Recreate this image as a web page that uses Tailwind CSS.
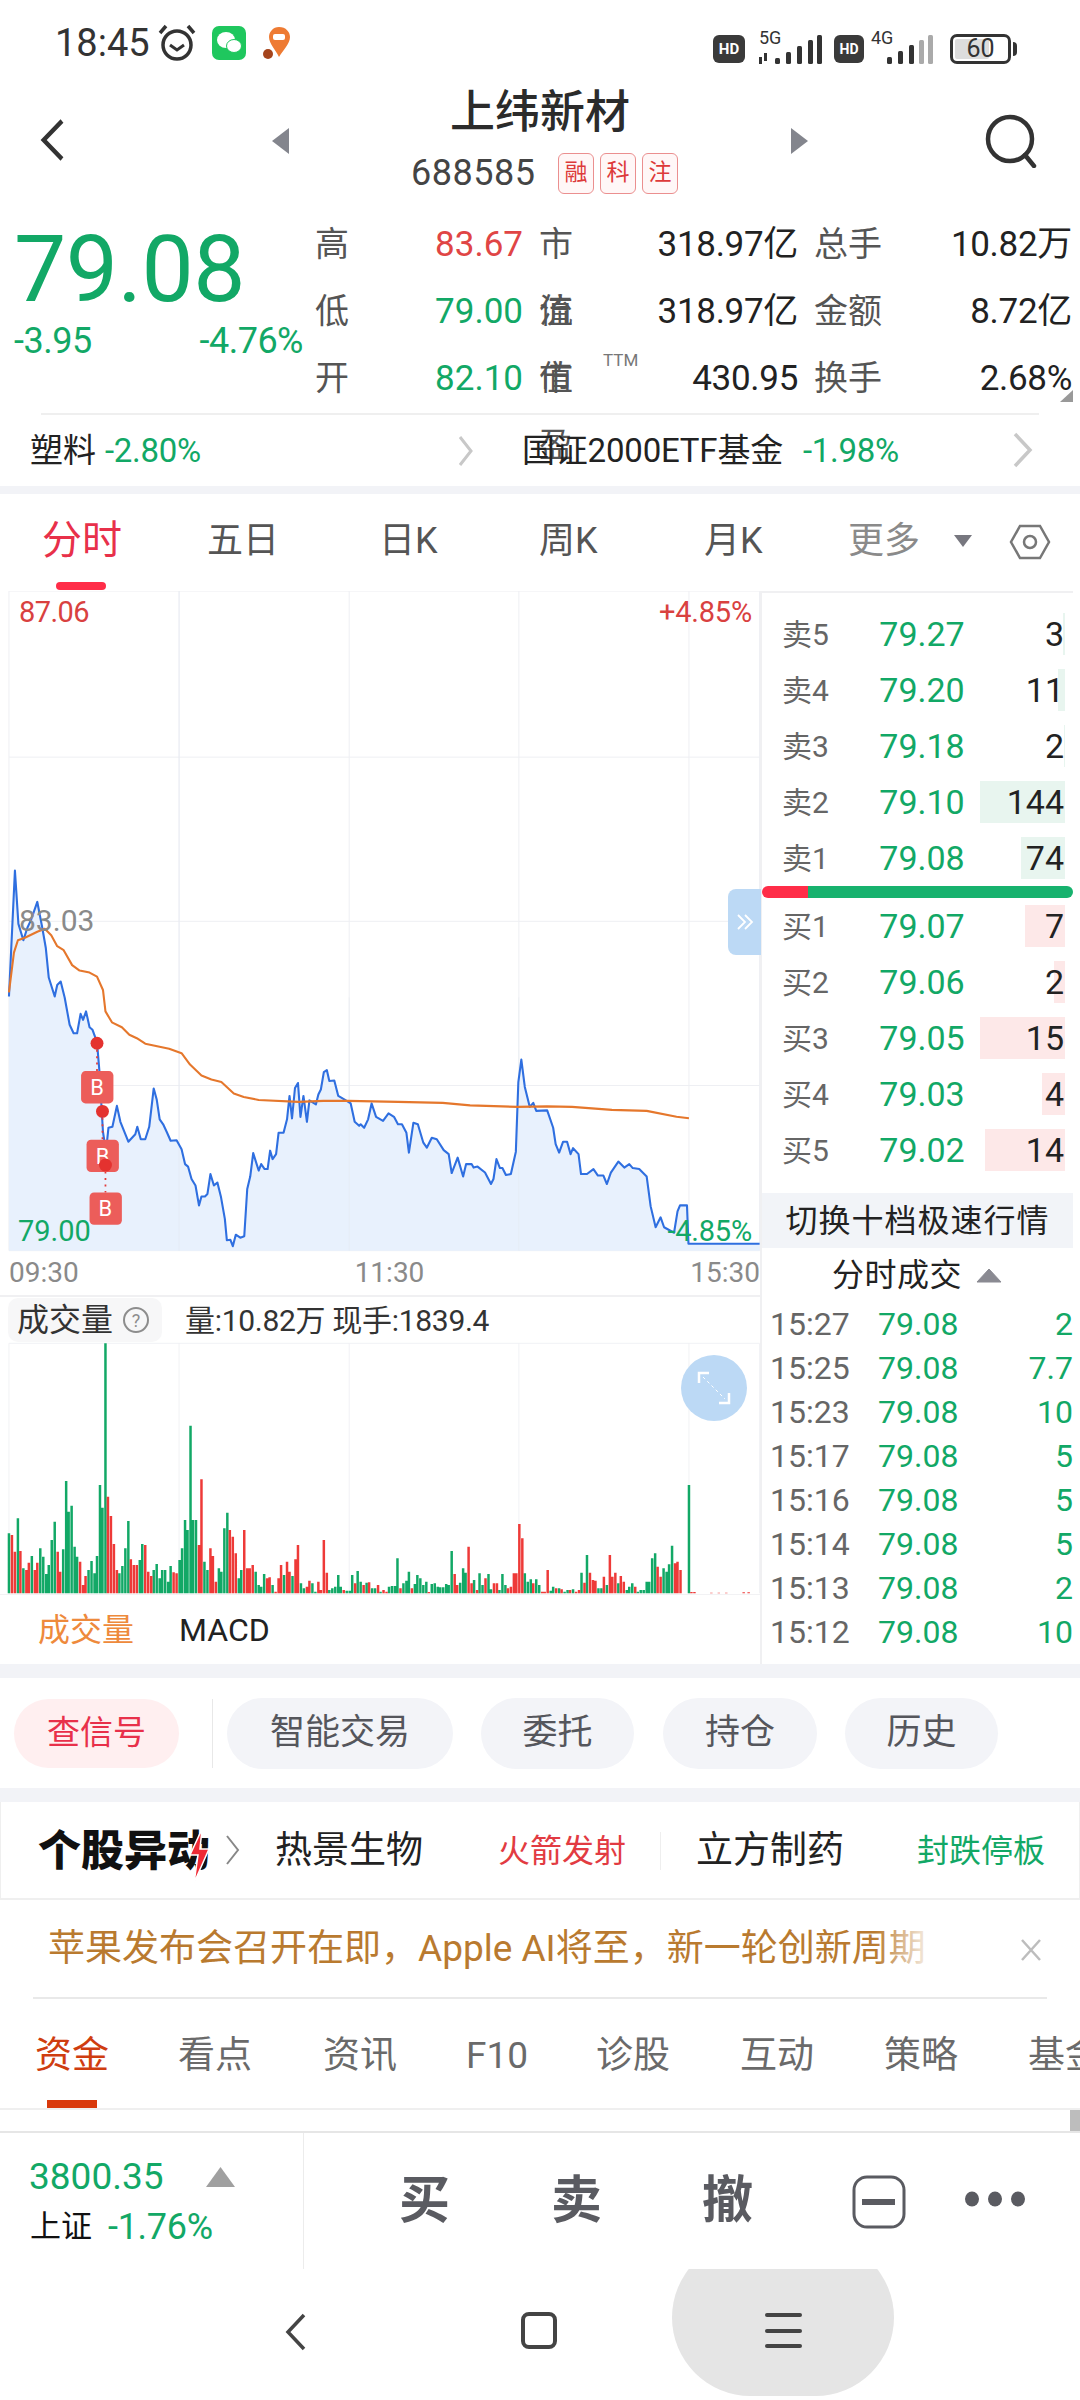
<!DOCTYPE html>
<html lang="zh-CN">
<head>
<meta charset="utf-8">
<title>上纬新材</title>
<script src="https://cdn.jsdelivr.net/npm/@tailwindcss/browser@4"></script>
</head>
<body>
<div class="w-[1080px] h-[2400px] bg-white overflow-hidden flex flex-col text-[#222] font-['Roboto','Noto_Sans_CJK_SC',sans-serif]">

<!-- status bar -->
<div class="h-[75px] shrink-0 relative flex items-center">
  <span class="ml-[55px] w-[102px] text-[38px] leading-none text-[#333] pt-[10px]">18:45</span>
  <svg class="mt-[10px]" width="40" height="40" viewBox="0 0 40 40" fill="none" stroke="#333" stroke-width="3.5"><circle cx="20" cy="22" r="14"/><path d="M13 22l7 5 7-5" stroke-width="3"/><path d="M3 10 9 3M37 10 31 3"/></svg>
  <div class="ml-[15px] mt-[10px] w-[34px] h-[34px] rounded-[7px] bg-[#1fc75e] flex items-center justify-center">
    <svg width="26" height="24" viewBox="0 0 26 24" fill="#fff"><ellipse cx="10" cy="9" rx="9" ry="8"/><ellipse cx="18" cy="15" rx="7.5" ry="6.5" stroke="#1fc75e"/></svg>
  </div>
  <svg class="ml-[15px] mt-[10px]" width="33" height="36" viewBox="0 0 33 36"><path d="M18 2c7 0 11 5 11 10 0 7-7 13-11 20-3-7-10-13-10-20C8 7 12 2 18 2z" fill="#ee7b33"/><rect x="12" y="9" width="12" height="6" rx="2" fill="#fff"/><circle cx="7" cy="29" r="5" fill="#a5441c"/></svg>

  <div class="absolute left-[713px] top-[35px] w-[32px] h-[28px] rounded-[6px] bg-[#3a3a3a] text-white text-[15px] font-bold flex items-center justify-center">HD</div>
  <span class="absolute left-[759px] top-[28px] text-[18px] leading-[20px] text-[#333]">5G</span>
  <svg class="absolute left-[757px] top-[35px]" width="66" height="30" viewBox="0 0 66 30" fill="#333"><path d="M2 22h3v7H2zM7 18h3v8H7z"/><rect x="18" y="23" width="5" height="6" rx="1.5"/><rect x="29" y="17" width="5" height="12" rx="1.5"/><rect x="40" y="11" width="5" height="18" rx="1.5"/><rect x="51" y="5" width="5" height="24" rx="1.5"/><rect x="60" y="0" width="5" height="29" rx="1.5"/></svg>
  <div class="absolute left-[834px] top-[35px] w-[30px] h-[28px] rounded-[6px] bg-[#3a3a3a] text-white text-[14px] font-bold flex items-center justify-center">HD</div>
  <span class="absolute left-[871px] top-[28px] text-[18px] leading-[20px] text-[#333]">4G</span>
  <svg class="absolute left-[885px] top-[35px]" width="50" height="30" viewBox="0 0 50 30"><rect x="2" y="22" width="5" height="7" rx="1.5" fill="#333"/><rect x="13" y="16" width="5" height="13" rx="1.5" fill="#333"/><rect x="24" y="10" width="5" height="19" rx="1.5" fill="#333"/><rect x="34" y="5" width="5" height="24" rx="1.5" fill="#aaa"/><rect x="43" y="0" width="5" height="29" rx="1.5" fill="#aaa"/></svg>
  <div class="absolute left-[950px] top-[34px] w-[61px] h-[30px] rounded-[7px] border-[3px] border-[#333] p-[2px]"><div class="w-[34px] h-full bg-[#ddd] rounded-[2px]"></div></div>
  <span class="absolute left-[950px] top-[34px] w-[61px] h-[30px] text-center text-[25px] leading-[30px] text-[#333]">60</span>
  <div class="absolute left-[1013px] top-[42px] w-[4px] h-[14px] rounded-r bg-[#333]"></div>
</div>

<!-- header -->
<div class="h-[135px] shrink-0 relative">
  <svg class="absolute left-[40px] top-[43px]" width="28" height="44" viewBox="0 0 28 44" fill="none" stroke="#333" stroke-width="4.5"><path d="M25 3 5 22l20 19" stroke-linejoin="miter" transform="translate(-1 0) scale(.92 1)"/></svg>
  <svg class="absolute left-[272px] top-[53px]" width="18" height="26" viewBox="0 0 18 26" fill="#83858d"><path d="M17 0v26L0 13z"/></svg>
  <svg class="absolute left-[791px] top-[53px]" width="18" height="26" viewBox="0 0 18 26" fill="#83858d"><path d="M0 0v26l17-13z"/></svg>
  <div class="absolute left-0 w-full top-[10px] text-center text-[45px] leading-[56px] font-medium text-[#2b2b2b] pl-[-1px]">上纬新材</div>
  <div class="absolute left-[411px] top-[74px] h-[48px] flex items-center">
    <span class="w-[147px] text-[36px] text-[#444] tracking-[0.5px]">688585</span>
    <span class="w-[36px] h-[41px] rounded-[6px] border border-[#eb8f8f] bg-[#fff7f7] text-[#dd3a3a] text-[23px] flex items-center justify-center">融</span>
    <span class="ml-[6px] w-[36px] h-[41px] rounded-[6px] border border-[#eb8f8f] bg-[#fff7f7] text-[#dd3a3a] text-[23px] flex items-center justify-center">科</span>
    <span class="ml-[6px] w-[36px] h-[41px] rounded-[6px] border border-[#eb8f8f] bg-[#fff7f7] text-[#dd3a3a] text-[23px] flex items-center justify-center">注</span>
  </div>
  <svg class="absolute left-[984px] top-[39px]" width="56" height="54" viewBox="0 0 56 54" fill="none" stroke="#333" stroke-width="4.5"><circle cx="26" cy="25" r="22"/><path d="M41 41l9 11" stroke-linecap="round"/></svg>
</div>

<!-- quote -->
<div class="h-[203px] shrink-0 relative flex">
  <div class="w-[315px] shrink-0 text-[#12a866]">
    <div class="pl-[14px] pt-[14px] text-[93px] leading-[92px] h-[106px] tracking-[-0.5px]">79.08</div>
    <div class="pl-[14px] pr-[12px] flex justify-between text-[36px] leading-[44px] mt-[3px]"><span class="tracking-[-0.5px]">-3.95</span><span class="tracking-[-0.5px]">-4.76%</span></div>
  </div>
  <div class="flex-1 pt-[1px] text-[34px] leading-[67px]">
    <div class="flex h-[67px]">
      <span class="w-[48px] text-[#555]">高</span><span class="w-[160px] text-right text-[#e04545] text-[35px]">83.67</span><span class="ml-[16px] w-[67px] text-[#555]">市值</span><span class="w-[192px] text-right text-[35px] tracking-[-0.3px]">318.97亿</span><span class="ml-[16px] w-[68px] text-[#555]">总手</span><span class="w-[190px] text-right text-[35px] tracking-[-0.3px]">10.82万</span>
    </div>
    <div class="flex h-[67px]">
      <span class="w-[48px] text-[#555]">低</span><span class="w-[160px] text-right text-[#12a866] text-[35px]">79.00</span><span class="ml-[16px] w-[67px] text-[#555]">流值</span><span class="w-[192px] text-right text-[35px] tracking-[-0.3px]">318.97亿</span><span class="ml-[16px] w-[68px] text-[#555]">金额</span><span class="w-[190px] text-right text-[35px] tracking-[-0.3px]">8.72亿</span>
    </div>
    <div class="flex h-[67px]">
      <span class="w-[48px] text-[#555]">开</span><span class="w-[160px] text-right text-[#12a866] text-[35px]">82.10</span><span class="ml-[16px] w-[67px] text-[#555] relative">市盈<span class="absolute left-[64px] top-[-18px] text-[17px] text-[#777]">TTM</span></span><span class="w-[192px] text-right text-[35px] tracking-[-0.3px]">430.95</span><span class="ml-[16px] w-[68px] text-[#555]">换手</span><span class="w-[190px] text-right text-[35px] tracking-[-0.3px]">2.68%</span>
    </div>
  </div>
  <div class="absolute left-[1060px] top-[180px] w-0 h-0 border-l-[13px] border-l-transparent border-b-[12px] border-b-[#999]"></div>
</div>

<!-- related -->
<div class="h-[73px] shrink-0 mx-[41px] border-t-2 border-[#efefef] relative flex items-center text-[33px]">
  <span class="absolute left-[-11px]">塑料</span><span class="absolute left-[64px] text-[#12a866] tracking-[-0.3px]">-2.80%</span>
  <svg class="absolute left-[416px] top-[20px]" width="18" height="32" viewBox="0 0 18 32" fill="none" stroke="#c8c8c8" stroke-width="3"><path d="M3 2l11 14L3 30"/></svg>
  <span class="absolute left-[481px] tracking-[-0.2px]">国证2000ETF基金</span><span class="absolute left-[762px] text-[#12a866] tracking-[-0.3px]">-1.98%</span>
  <svg class="absolute left-[971px] top-[17px]" width="22" height="36" viewBox="0 0 22 36" fill="none" stroke="#c8c8c8" stroke-width="3.5"><path d="M3 2l15 16L3 34"/></svg>
</div>
<div class="h-[8px] shrink-0 bg-[#f2f3f7]"></div>

<!-- chart tabs -->
<div class="h-[97px] shrink-0 relative flex items-center text-[36px] text-[#555]">
  <span class="absolute left-[42px] top-[22px] text-[40px] leading-[50px] text-[#e8304a]">分时</span>
  <div class="absolute left-[56px] top-[88px] w-[50px] h-[8px] rounded-full bg-[#ff2d48]"></div>
  <span class="absolute left-[207px] top-[22px] leading-[50px]">五日</span>
  <span class="absolute left-[379px] top-[22px] leading-[50px]">日K</span>
  <span class="absolute left-[539px] top-[22px] leading-[50px]">周K</span>
  <span class="absolute left-[704px] top-[22px] leading-[50px]">月K</span>
  <span class="absolute left-[848px] top-[22px] leading-[50px] text-[#8a8a8a]">更多</span>
  <svg class="absolute left-[953px] top-[40px]" width="20" height="14" viewBox="0 0 20 14" fill="#77777f"><path d="M1 1h18L10 13z"/></svg>
  <svg class="absolute left-[1009px] top-[29px]" width="42" height="38" viewBox="0 0 42 38" fill="none" stroke="#777" stroke-width="2.5"><path d="M11 3h20l9 16-9 16H11L2 19z"/><circle cx="21" cy="19" r="6"/></svg>
</div>

<!-- market body -->
<div class="h-[1073px] shrink-0 flex overflow-hidden">
  <div class="w-[760px] shrink-0 relative h-full">
    <!-- intraday chart -->
    <div class="relative h-[660px] w-[760px]">
      <svg class="absolute left-0 top-[-91px]" width="780" height="780" viewBox="0 0 1568 1568" fill="none">
        <path d="M18 183H1527V1509H18Z M18 517H1527 M18 847H1527 M18 1177H1527 M360 183V1509 M702 183V1509 M1043 183V1509 M1385 183V1509" stroke="#eeeff3" stroke-width="2"/>
        <path id="pf" d="M18 1509V998L30 745 37 852 47 885 55 860 62 845 75 808 85 860 92 900 98 960 110 998 115 975 122 968 130 1000 140 1055 148 1072 155 1072 162 1033 167 1045 173 1028 180 1060 186 1065 195 1090 200 1150 207 1270 213 1310 218 1262 226 1260 235 1218 242 1250 258 1290 272 1275 276 1260 283 1285 292 1285 300 1260 309 1183 315 1205 321 1245 328 1255 335 1270 343 1288 355 1287 365 1305 372 1335 378 1340 385 1365 393 1378 400 1418 405 1400 412 1400 417 1395 423 1355 430 1378 437 1372 444 1400 452 1445 456 1488 463 1487 468 1500 474 1477 483 1483 491 1480 497 1385 503 1360 509 1313 520 1348 525 1335 532 1345 538 1345 543 1308 548 1325 555 1315 560 1272 570 1272 577 1245 582 1198 587 1243 593 1182 599 1172 604 1240 610 1198 617 1250 622 1207 635 1215 640 1195 645 1185 651 1150 657 1146 662 1168 672 1167 680 1198 692 1205 705 1213 713 1250 722 1258 725 1255 732 1262 740 1245 747 1213 756 1240 770 1248 781 1233 792 1240 800 1255 808 1255 817 1272 822 1312 831 1252 840 1255 851 1292 858 1302 868 1282 878 1285 892 1307 902 1315 908 1353 920 1322 931 1360 937 1335 948 1335 952 1342 960 1340 975 1352 987 1375 992 1365 998 1325 1005 1343 1010 1343 1017 1357 1027 1355 1037 1310 1042 1170 1048 1125 1055 1180 1065 1220 1072 1212 1078 1228 1100 1227 1112 1262 1117 1295 1124 1312 1132 1290 1140 1290 1147 1315 1152 1303 1163 1315 1168 1355 1180 1355 1193 1345 1202 1358 1213 1358 1220 1375 1228 1352 1243 1330 1255 1342 1265 1335 1272 1343 1285 1345 1300 1360 1308 1420 1318 1462 1328 1442 1335 1462 1355 1473 1362 1430 1367 1418 1381 1418 1384 1495 1527 1495V1509Z" fill="#e8f1fd"/>
        <path d="M360 183V1509 M702 1000V1509 M1043 1000V1509" stroke="#e3e8f0" stroke-width="1.5" opacity=".6"/>
        <path d="M18 998L30 745 37 852 47 885 55 860 62 845 75 808 85 860 92 900 98 960 110 998 115 975 122 968 130 1000 140 1055 148 1072 155 1072 162 1033 167 1045 173 1028 180 1060 186 1065 195 1090 200 1150 207 1270 213 1310 218 1262 226 1260 235 1218 242 1250 258 1290 272 1275 276 1260 283 1285 292 1285 300 1260 309 1183 315 1205 321 1245 328 1255 335 1270 343 1288 355 1287 365 1305 372 1335 378 1340 385 1365 393 1378 400 1418 405 1400 412 1400 417 1395 423 1355 430 1378 437 1372 444 1400 452 1445 456 1488 463 1487 468 1500 474 1477 483 1483 491 1480 497 1385 503 1360 509 1313 520 1348 525 1335 532 1345 538 1345 543 1308 548 1325 555 1315 560 1272 570 1272 577 1245 582 1198 587 1243 593 1182 599 1172 604 1240 610 1198 617 1250 622 1207 635 1215 640 1195 645 1185 651 1150 657 1146 662 1168 672 1167 680 1198 692 1205 705 1213 713 1250 722 1258 725 1255 732 1262 740 1245 747 1213 756 1240 770 1248 781 1233 792 1240 800 1255 808 1255 817 1272 822 1312 831 1252 840 1255 851 1292 858 1302 868 1282 878 1285 892 1307 902 1315 908 1353 920 1322 931 1360 937 1335 948 1335 952 1342 960 1340 975 1352 987 1375 992 1365 998 1325 1005 1343 1010 1343 1017 1357 1027 1355 1037 1310 1042 1170 1048 1125 1055 1180 1065 1220 1072 1212 1078 1228 1100 1227 1112 1262 1117 1295 1124 1312 1132 1290 1140 1290 1147 1315 1152 1303 1163 1315 1168 1355 1180 1355 1193 1345 1202 1358 1213 1358 1220 1375 1228 1352 1243 1330 1255 1342 1265 1335 1272 1343 1285 1345 1300 1360 1308 1420 1318 1462 1328 1442 1335 1462 1355 1473 1362 1430 1367 1418 1381 1418 1384 1495 1527 1495" stroke="#2f6fe0" stroke-width="4.2" stroke-linejoin="round"/>
        <path d="M18 990 28 910 36 885 50 880 75 868 90 862 103 875 115 897 128 905 145 935 160 946 180 950 195 958 207 985 212 1028 225 1050 245 1060 260 1075 275 1082 292 1093 340 1103 365 1112 382 1135 405 1157 425 1165 445 1170 470 1193 490 1200 520 1206 600 1210 650 1208 700 1208 800 1210 890 1212 945 1217 1040 1220 1100 1219 1150 1220 1230 1226 1300 1228 1360 1240 1385 1243" stroke="#e5772c" stroke-width="4.2" stroke-linejoin="round"/>
        <path d="M195 1092V1150 M206 1229V1288 M212 1337V1392" stroke="#e23b3b" stroke-width="3.5" stroke-dasharray="4 9"/>
        <rect x="163" y="1148" width="65" height="65" rx="9" fill="#ec5d5a"/>
        <rect x="174" y="1286" width="65" height="65" rx="9" fill="#ec5d5a"/>
        <rect x="180" y="1392" width="65" height="65" rx="9" fill="#ec5d5a"/>
        <text x="195" y="1196" text-anchor="middle" font-size="44" fill="#fff">B</text>
        <text x="206" y="1334" text-anchor="middle" font-size="44" fill="#fff">B</text>
        <text x="212" y="1440" text-anchor="middle" font-size="44" fill="#fff">B</text>
        <circle cx="195" cy="1092" r="13" fill="#e4322f"/>
        <circle cx="206" cy="1229" r="13" fill="#e4322f"/>
        <circle cx="212" cy="1337" r="13" fill="#e4322f"/>
      </svg>
      <span class="absolute left-[19px] top-[6px] text-[29px] leading-[30px] text-[#d9413f] tracking-[-0.6px]">87.06</span>
      <span class="absolute right-[8px] top-[6px] text-[29px] leading-[30px] text-[#d9413f] tracking-[-0.2px]">+4.85%</span>
      <span class="absolute left-[19px] top-[315px] text-[30px] leading-[30px] text-[#8a8a8a]">83.03</span>
      <span class="absolute left-[18px] top-[625px] text-[29px] leading-[30px] text-[#12a866]">79.00</span>
      <span class="absolute right-[8px] top-[625px] text-[29px] leading-[30px] text-[#12a866] tracking-[-0.2px]">-4.85%</span>
      <div class="absolute left-[728px] top-[298px] w-[33px] h-[66px] rounded-l-[8px] bg-[#bcd9f5] flex items-center justify-center">
        <svg width="18" height="18" viewBox="0 0 18 18" fill="none" stroke="#fff" stroke-width="1.8"><path d="M2 2l7 7-7 7M9 2l7 7-7 7"/></svg>
      </div>
    </div>
    <!-- time axis -->
    <div class="h-[46px] flex justify-between items-center pl-[9px] pr-[0px] text-[28px] text-[#8a8a8a] border-b-2 border-[#f0f0f2]">
      <span>09:30</span><span class="ml-[10px]">11:30</span><span>15:30</span>
    </div>
    <!-- volume legend -->
    <div class="h-[46px] flex items-center">
      <div class="ml-[8px] w-[154px] h-[44px] rounded-[10px] bg-[#f7f7f8] flex items-center pl-[9px]">
        <span class="text-[32px] text-[#333]">成交量</span>
        <span class="ml-[10px] w-[26px] h-[26px] rounded-full border-2 border-[#8d8d8d] text-[#8d8d8d] text-[18px] flex items-center justify-center">?</span>
      </div>
      <span class="ml-[23px] text-[30px] text-[#333] tracking-[-0.3px]">量:10.82万 现手:1839.4</span>
    </div>
    <!-- volume chart -->
    <div class="relative h-[251px] w-[760px]">
      <svg class="absolute left-0 top-[-73px]" width="780" height="400" viewBox="0 0 1568 1200" preserveAspectRatio="none" fill="none">
        <path d="M18 220H1527V970 M18 220V970 M360 220V970 M702 220V970 M1043 220V970 M1385 220V970" stroke="#eeeff3" stroke-width="2"/>
        <path stroke="#12a866" stroke-width="5" d="M18 790V970M36 745V970M47 895V970M64 858V970M81 835V970M87 860V970M93 912V970M98 885V970M104 810V970M110 755V970M127 838V970M133 633V970M138 725V970M144 707V970M150 830V970M155 860V970M178 900V970M184 873V970M190 910V970M195 858V970M201 645V970M206 713V970M212 220V970M240 910V970M246 888V970M252 835V970M258 753V970M281 870V970M286 822V970M309 900V970M315 882V970M321 925V970M326 900V970M332 900V970M338 935V970M343 888V970M361 870V970M366 835V970M372 750V970M377 780V970M383 467V970M388 750V970M394 750V970M411 875V970M417 900V970M440 895V970M445 905V970M451 775V970M457 728V970M480 925V970M485 900V970M514 905V970M520 945V970M525 950V970M531 912V970M548 945V970M571 915V970M588 918V970M605 940V970M611 955V970M628 940V970M634 965V970M662 960V970M668 955V970M674 950V970M680 915V970M685 950V970M697 962V970M703 962V970M708 915V970M719 903V970M725 935V970M737 938V970M748 955V970M754 955V970M765 965V970M782 950V970M788 948V970M794 948V970M799 865V970M811 940V970M817 932V970M822 905V970M834 942V970M839 915V970M845 925V970M851 945V970M857 935V970M868 942V970M874 940V970M880 950V970M885 952V970M891 952V970M897 942V970M902 945V970M908 843V970M925 938V970M931 895V970M936 908V970M953 930V970M964 910V970M970 945V970M982 912V970M987 958V970M1004 960V970M1010 912V970M1016 945V970M1055 910V970M1061 935V970M1067 928V970M1078 928V970M1084 945V970M1107 962V970M1112 950V970M1124 955V970M1135 965V970M1141 960V970M1152 958V970M1169 908V970M1180 855V970M1203 955V970M1209 955V970M1220 945V970M1243 940V970M1260 960V970M1265 950V970M1271 940V970M1282 965V970M1288 960V970M1294 960V970M1300 935V970M1305 935V970M1311 865V970M1317 850V970M1334 895V970M1340 905V970M1345 883V970M1351 827V970M1385 645V970"/>
        <path stroke="#ee3a38" stroke-width="5" d="M24 795V970M30 845V970M41 843V970M53 900V970M58 878V970M70 900V970M75 878V970M116 845V970M121 905V970M161 875V970M167 945V970M172 918V970M217 680V970M223 738V970M229 822V970M235 900V970M263 868V970M269 885V970M275 885V970M292 825V970M298 905V970M304 918V970M349 907V970M355 910V970M400 825V970M405 628V970M423 835V970M428 858V970M434 935V970M462 780V970M468 800V970M474 850V970M491 780V970M497 895V970M502 895V970M508 885V970M537 925V970M542 922V970M554 965V970M560 925V970M565 885V970M577 875V970M582 905V970M594 868V970M599 825V970M617 950V970M622 932V970M640 935V970M645 960V970M651 810V970M657 908V970M691 960V970M714 940V970M731 945V970M742 937V970M760 945V970M771 960V970M777 965V970M805 955V970M828 955V970M862 966V970M914 912V970M919 945V970M942 830V970M948 940V970M959 960V970M976 925V970M993 940V970M999 940V970M1021 955V970M1027 950V970M1033 910V970M1038 910V970M1044 762V970M1050 805V970M1072 940V970M1090 965V970M1095 965V970M1101 900V970M1118 955V970M1129 958V970M1146 960V970M1158 965V970M1164 960V970M1175 938V970M1186 908V970M1192 930V970M1197 932V970M1214 920V970M1226 855V970M1231 920V970M1237 908V970M1248 918V970M1254 935V970M1277 950V970M1322 890V970M1328 920V970M1357 880V970M1362 875V970M1368 900V970M1390 966V970M1396 966V970M1430 968V970M1445 968V970M1460 968V970M1495 967V970M1505 967V970"/>
      </svg>
      <div class="absolute left-[681px] top-[12px] w-[66px] h-[66px] rounded-full bg-[#bcd9f5] flex items-center justify-center">
        <svg width="34" height="34" viewBox="0 0 34 34" fill="none" stroke="#fff" stroke-width="2.5"><path d="M2 12V2h10M32 22v10H22"/><path d="M6 6l22 22" stroke-width="1" stroke-dasharray="3 3"/></svg>
      </div>
    </div>
    <!-- indicator tabs -->
    <div class="h-[70px] relative flex items-center text-[32px] border-t border-[#f2f2f4]">
      <span class="ml-[38px] text-[#ee8a3c]">成交量</span>
      <span class="ml-[45px] text-[#222]">MACD</span>
    </div>
  </div>

  <!-- order book -->
  <div class="w-[320px] shrink-0 h-full border-l-2 border-[#f0f0f2]">
    <div class="w-[311px] border-t-2 border-[#f0f0f2] h-[15px]"></div>
    <div class="w-[311px] text-[30px]">
      <div class="h-[56px] relative flex items-center pl-[20px]"><div class="absolute right-[8px] top-[7px] w-[2px] h-[42px] bg-[#e8f5ef]"></div><span class="w-[80px] text-[#666]">卖5</span><span class="w-[120px] text-center text-[34px] text-[#12a866]">79.27</span><span class="relative flex-1 text-right pr-[9px] text-[34px]">3</span></div>
      <div class="h-[56px] relative flex items-center pl-[20px]"><div class="absolute right-[8px] top-[7px] w-[7px] h-[42px] bg-[#e8f5ef]"></div><span class="w-[80px] text-[#666]">卖4</span><span class="w-[120px] text-center text-[34px] text-[#12a866]">79.20</span><span class="relative flex-1 text-right pr-[9px] text-[34px]">11</span></div>
      <div class="h-[56px] relative flex items-center pl-[20px]"><div class="absolute right-[8px] top-[7px] w-[1px] h-[42px] bg-[#e8f5ef]"></div><span class="w-[80px] text-[#666]">卖3</span><span class="w-[120px] text-center text-[34px] text-[#12a866]">79.18</span><span class="relative flex-1 text-right pr-[9px] text-[34px]">2</span></div>
      <div class="h-[56px] relative flex items-center pl-[20px]"><div class="absolute right-[8px] top-[7px] w-[85px] h-[42px] bg-[#e8f5ef]"></div><span class="w-[80px] text-[#666]">卖2</span><span class="w-[120px] text-center text-[34px] text-[#12a866]">79.10</span><span class="relative flex-1 text-right pr-[9px] text-[34px]">144</span></div>
      <div class="h-[56px] relative flex items-center pl-[20px]"><div class="absolute right-[8px] top-[7px] w-[44px] h-[42px] bg-[#e8f5ef]"></div><span class="w-[80px] text-[#666]">卖1</span><span class="w-[120px] text-center text-[34px] text-[#12a866]">79.08</span><span class="relative flex-1 text-right pr-[9px] text-[34px]">74</span></div>
      <div class="h-[12px] flex rounded-full overflow-hidden"><div class="w-[46px] bg-[#ff2d48]"></div><div class="flex-1 bg-[#17b26e]"></div></div>
      <div class="h-[56px] relative flex items-center pl-[20px]"><div class="absolute right-[8px] top-[7px] w-[40px] h-[42px] bg-[#fde8e8]"></div><span class="w-[80px] text-[#666]">买1</span><span class="w-[120px] text-center text-[34px] text-[#12a866]">79.07</span><span class="relative flex-1 text-right pr-[9px] text-[34px]">7</span></div>
      <div class="h-[56px] relative flex items-center pl-[20px]"><div class="absolute right-[8px] top-[7px] w-[11px] h-[42px] bg-[#fde8e8]"></div><span class="w-[80px] text-[#666]">买2</span><span class="w-[120px] text-center text-[34px] text-[#12a866]">79.06</span><span class="relative flex-1 text-right pr-[9px] text-[34px]">2</span></div>
      <div class="h-[56px] relative flex items-center pl-[20px]"><div class="absolute right-[8px] top-[7px] w-[85px] h-[42px] bg-[#fde8e8]"></div><span class="w-[80px] text-[#666]">买3</span><span class="w-[120px] text-center text-[34px] text-[#12a866]">79.05</span><span class="relative flex-1 text-right pr-[9px] text-[34px]">15</span></div>
      <div class="h-[56px] relative flex items-center pl-[20px]"><div class="absolute right-[8px] top-[7px] w-[23px] h-[42px] bg-[#fde8e8]"></div><span class="w-[80px] text-[#666]">买4</span><span class="w-[120px] text-center text-[34px] text-[#12a866]">79.03</span><span class="relative flex-1 text-right pr-[9px] text-[34px]">4</span></div>
      <div class="h-[56px] relative flex items-center pl-[20px]"><div class="absolute right-[8px] top-[7px] w-[80px] h-[42px] bg-[#fde8e8]"></div><span class="w-[80px] text-[#666]">买5</span><span class="w-[120px] text-center text-[34px] text-[#12a866]">79.02</span><span class="relative flex-1 text-right pr-[9px] text-[34px]">14</span></div>
      <div class="mt-[15px] h-[55px] bg-[#f2f4f8] flex items-center justify-center text-[32px] tracking-[1px] text-[#222]">切换十档极速行情</div>
      <div class="h-[54px] flex items-center pl-[70px] text-[32px] text-[#222] tracking-[0.5px]">分时成交<svg class="ml-[14px]" width="26" height="15" viewBox="0 0 26 15" fill="#8a8a92"><path d="M13 1 25 14H1z" stroke="#8a8a92" stroke-linejoin="round"/></svg></div>
    </div>
    <div class="w-[320px] text-[32px] text-[#12a866]">
      <div class="h-[44px] flex items-center pl-[8px] pr-[9px]"><span class="w-[108px] text-[#666]">15:27</span><span>79.08</span><span class="flex-1 text-right">2</span></div>
      <div class="h-[44px] flex items-center pl-[8px] pr-[9px]"><span class="w-[108px] text-[#666]">15:25</span><span>79.08</span><span class="flex-1 text-right">7.7</span></div>
      <div class="h-[44px] flex items-center pl-[8px] pr-[9px]"><span class="w-[108px] text-[#666]">15:23</span><span>79.08</span><span class="flex-1 text-right">10</span></div>
      <div class="h-[44px] flex items-center pl-[8px] pr-[9px]"><span class="w-[108px] text-[#666]">15:17</span><span>79.08</span><span class="flex-1 text-right">5</span></div>
      <div class="h-[44px] flex items-center pl-[8px] pr-[9px]"><span class="w-[108px] text-[#666]">15:16</span><span>79.08</span><span class="flex-1 text-right">5</span></div>
      <div class="h-[44px] flex items-center pl-[8px] pr-[9px]"><span class="w-[108px] text-[#666]">15:14</span><span>79.08</span><span class="flex-1 text-right">5</span></div>
      <div class="h-[44px] flex items-center pl-[8px] pr-[9px]"><span class="w-[108px] text-[#666]">15:13</span><span>79.08</span><span class="flex-1 text-right">2</span></div>
      <div class="h-[44px] flex items-center pl-[8px] pr-[9px]"><span class="w-[108px] text-[#666]">15:12</span><span>79.08</span><span class="flex-1 text-right">10</span></div>
      <div class="h-[44px] flex items-center pl-[8px] pr-[9px]"><span class="w-[108px] text-[#666]">15:10</span><span>79.08</span><span class="flex-1 text-right">3.1</span></div>
    </div>
  </div>
</div>
<div class="h-[14px] shrink-0 bg-[#f2f3f7]"></div>

<!-- action chips -->
<div class="h-[110px] shrink-0 flex items-center text-[35px] text-[#55565c]">
  <div class="ml-[14px] w-[165px] h-[69px] rounded-full bg-[#ffeff0] text-[#e8304a] text-[33px] flex items-center justify-center">查信号</div>
  <div class="ml-[33px] w-[1px] h-[69px] bg-[#e8e8e8]"></div>
  <div class="ml-[14px] w-[226px] h-[71px] rounded-full bg-[#f3f4f8] flex items-center justify-center">智能交易</div>
  <div class="ml-[28px] w-[153px] h-[71px] rounded-full bg-[#f3f4f8] flex items-center justify-center">委托</div>
  <div class="ml-[29px] w-[154px] h-[71px] rounded-full bg-[#f3f4f8] flex items-center justify-center">持仓</div>
  <div class="ml-[28px] w-[153px] h-[71px] rounded-full bg-[#f3f4f8] flex items-center justify-center">历史</div>
</div>
<div class="h-[14px] shrink-0 bg-[#f2f3f7]"></div>

<!-- movers -->
<div class="h-[98px] shrink-0 relative border-b-2 border-x border-[#efefef]">
  <span class="absolute left-[37px] top-[24px] text-[43px] leading-[50px] font-black text-[#111]">个股异动</span>
  <svg class="absolute left-[186px] top-[27px]" width="24" height="54" viewBox="0 0 24 54"><path d="M15 0 3 26h8L7 54 22 20h-9z" fill="#ef2b35" stroke="#fff" stroke-width="1.5"/></svg>
  <svg class="absolute left-[224px] top-[32px]" width="16" height="32" viewBox="0 0 16 32" fill="none" stroke="#888" stroke-width="2"><path d="M2 2l11 14L2 30"/></svg>
  <span class="absolute left-[274px] top-[24px] text-[37px] leading-[50px] text-[#222]">热景生物</span>
  <span class="absolute left-[497px] top-[24px] text-[32px] leading-[50px] text-[#e23b42]">火箭发射</span>
  <div class="absolute left-[659px] top-[30px] w-[1px] h-[38px] bg-[#eee]"></div>
  <span class="absolute left-[695px] top-[24px] text-[37px] leading-[50px] text-[#222]">立方制药</span>
  <span class="absolute left-[916px] top-[24px] text-[32px] leading-[50px] text-[#12a866]">封跌停板</span>
</div>

<!-- ticker -->
<div class="h-[99px] shrink-0 mx-[33px] relative border-b-2 border-[#e9e9e9]">
  <div class="absolute left-[15px] top-[24px] w-[887px] h-[50px] overflow-hidden whitespace-nowrap text-[37px] leading-[50px] text-[#b97a2f]">苹果发布会召开在即，Apple AI将至，新一轮创新周期</div>
  <div class="absolute left-[842px] top-[24px] w-[60px] h-[50px] bg-gradient-to-r from-white/0 to-white"></div>
  <svg class="absolute left-[987px] top-[39px]" width="22" height="22" viewBox="0 0 22 22" fill="none" stroke="#bdbdbd" stroke-width="2.5"><path d="M2 1l18 20M20 1 2 21"/></svg>
</div>

<!-- news tabs -->
<div class="h-[111px] shrink-0 relative text-[37px] leading-[50px] text-[#6a6a6a] border-b-2 border-[#efefef] overflow-hidden">
  <span class="absolute left-[35px] top-[32px] text-[#cf3d10]">资金</span>
  <div class="absolute left-[47px] top-[101px] w-[50px] h-[8px] bg-[#d9390b]"></div>
  <span class="absolute left-[178px] top-[32px]">看点</span>
  <span class="absolute left-[323px] top-[32px]">资讯</span>
  <span class="absolute left-[466px] top-[32px]">F10</span>
  <span class="absolute left-[596px] top-[32px]">诊股</span>
  <span class="absolute left-[740px] top-[32px]">互动</span>
  <span class="absolute left-[884px] top-[32px]">策略</span>
  <span class="absolute left-[1028px] top-[32px] whitespace-nowrap">基金</span>
</div>
<div class="h-[23px] shrink-0 relative border-b-2 border-[#e6e6e6]"><div class="absolute right-0 top-0 w-[10px] h-[21px] bg-[#bdbdbd]"></div></div>

<!-- trade bar -->
<div class="h-[136px] shrink-0 relative">
  <span class="absolute left-[29px] top-[20px] text-[37px] leading-[48px] text-[#12a866]">3800.35</span>
  <svg class="absolute left-[206px] top-[34px]" width="29" height="20" viewBox="0 0 29 20" fill="#a0a0a0"><path d="M14.5 0 29 20H0z"/></svg>
  <span class="absolute left-[30px] top-[70px] text-[31px] leading-[48px] text-[#111]">上证</span>
  <span class="absolute left-[108px] top-[70px] text-[36px] leading-[48px] text-[#12a866] tracking-[-0.3px]">-1.76%</span>
  <div class="absolute left-[303px] top-0 w-[1px] h-[136px] bg-[#ececec]"></div>
  <span class="absolute left-[399px] top-[36px] text-[51px] leading-[64px] font-bold text-[#5a5b61]">买</span>
  <span class="absolute left-[551px] top-[36px] text-[51px] leading-[64px] font-bold text-[#5a5b61]">卖</span>
  <span class="absolute left-[702px] top-[36px] text-[51px] leading-[64px] font-bold text-[#5a5b61]">撤</span>
  <svg class="absolute left-[852px] top-[42px]" width="54" height="54" viewBox="0 0 54 54" fill="none" stroke="#5a5b61"><rect x="2" y="2" width="50" height="50" rx="13" stroke-width="3"/><path d="M10 27h33" stroke-width="6"/></svg>
  <svg class="absolute left-[964px] top-[58px]" width="62" height="16" viewBox="0 0 62 16" fill="#5a5b61"><ellipse cx="8" cy="8" rx="7" ry="7.5"/><ellipse cx="31" cy="8" rx="7" ry="7.5"/><ellipse cx="54" cy="8" rx="7" ry="7.5"/></svg>
</div>

<!-- system nav -->
<div class="h-[130px] shrink-0 relative overflow-hidden">
  <svg class="absolute left-[284px] top-[44px]" width="22" height="38" viewBox="0 0 22 38" fill="none" stroke="#444" stroke-width="3.5"><path d="M20 2 4 19l16 17"/></svg>
  <div class="absolute left-[521px] top-[43px] w-[36px] h-[37px] rounded-[8px] border-[4px] border-[#444]"></div>
  <div class="absolute left-[672px] top-[-30px] w-[222px] h-[157px] rounded-full bg-[#e5e5e5]"></div>
  <div class="absolute left-[765px] top-[44px] w-[37px] h-[4px] rounded-full bg-[#444]"></div>
  <div class="absolute left-[765px] top-[60px] w-[37px] h-[4px] rounded-full bg-[#444]"></div>
  <div class="absolute left-[765px] top-[75px] w-[37px] h-[4px] rounded-full bg-[#444]"></div>
</div>
</div>
</body>
</html>
